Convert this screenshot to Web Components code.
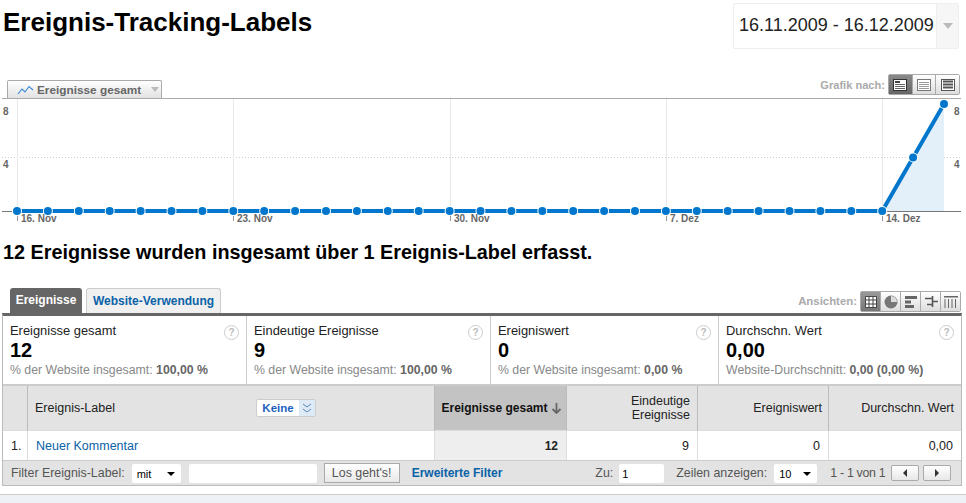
<!DOCTYPE html>
<html lang="de"><head><meta charset="utf-8"><title>Ereignis-Tracking-Labels</title>
<style>
html,body{margin:0;padding:0;background:#fff}
body{width:966px;height:503px;overflow:hidden;font:12px "Liberation Sans",Arial,sans-serif;color:#000}
</style></head><body>
<ga-head></ga-head>
<ga-chart></ga-chart>
<ga-summary>12 Ereignisse wurden insgesamt über 1 Ereignis-Label erfasst.</ga-summary>
<ga-tabs></ga-tabs>
<ga-report>
  <ga-stats>
    <ga-stat style="width:244px" label="Ereignisse gesamt" value="12" sub="% der Website insgesamt:" strong="100,00 %"></ga-stat>
    <ga-stat style="width:244px" label="Eindeutige Ereignisse" value="9" sub="% der Website insgesamt:" strong="100,00 %"></ga-stat>
    <ga-stat style="width:228px" label="Ereigniswert" value="0" sub="% der Website insgesamt:" strong="0,00 %"></ga-stat>
    <ga-stat style="flex:1" label="Durchschn. Wert" value="0,00" sub="Website-Durchschnitt:" strong="0,00 (0,00 %)"></ga-stat>
  </ga-stats>
  <ga-table></ga-table>
  <ga-filter></ga-filter>
</ga-report>
<ga-foot></ga-foot>
<script>
function def(name,css,html){
  customElements.define(name,class extends HTMLElement{
    connectedCallback(){
      if(this.shadowRoot)return;
      const r=this.attachShadow({mode:'open'});
      const h=typeof html==='function'?html(this):html;
      r.innerHTML='<style>'+css+'</style>'+h;
    }
  });
}
def('ga-head',`
:host{display:flex;justify-content:space-between;align-items:flex-start;height:74px;padding:3px 7px 0 3px;box-sizing:border-box}
h1{margin:3px 0 0;font:bold 26px/32px "Liberation Sans",sans-serif;white-space:nowrap}
.date{width:226px;height:46px;box-sizing:border-box;border:1px solid #eee;border-radius:2px;display:flex;font:18px/43px "Liberation Sans",sans-serif;color:#222;flex:none}
.date span{flex:1;padding-left:5px;white-space:nowrap}
.date i{width:21px;background:#f6f6f6;border-left:1px solid #eee;display:flex;align-items:center;justify-content:center}
.date i:after{content:"";border:5.5px solid transparent;border-top:6px solid #bbb;border-bottom:0}
`,`<h1>Ereignis-Tracking-Labels</h1><div class="date"><span>16.11.2009 - 16.12.2009</span><i></i></div>`);

def('ga-chart',`
:host{display:block;position:relative;height:154px;box-sizing:border-box}
.top{display:flex;justify-content:space-between;height:24px;padding:0 6px 0 7px;align-items:flex-end;box-sizing:border-box}
.tab{width:155px;height:18px;box-sizing:border-box;border:1px solid #aaa;border-bottom:0;border-radius:2px 2px 0 0;background:linear-gradient(#fff,#e2e2e2);display:flex;align-items:center;gap:3px;padding-left:9px;font:bold 11.8px "Liberation Sans",sans-serif;color:#666;white-space:nowrap}
.tab b{margin-left:7px;border:4px solid transparent;border-top:5px solid #bbb;border-bottom:0}
.right{display:flex;align-items:flex-start;height:24px;gap:3px;font:bold 11.1px/22px "Liberation Sans",sans-serif;color:#aaa;white-space:nowrap}
svg.c{display:block}
svg text{font:bold 10px "Liberation Sans",sans-serif;fill:#666}
.btns{display:flex;height:21px;border:1px solid #aaa;border-radius:2px;box-sizing:border-box;width:72px}
.btns span{flex:1;display:flex;align-items:center;justify-content:center;background:linear-gradient(#fff,#ddd);border-left:1px solid #aaa}
.btns span:first-child{border-left:0;background:linear-gradient(#8a8a8a,#666)}
`,()=>{
  let pts=[];for(let i=0;i<=30;i++){pts.push([17+i*30.9,i==29?59.5:i==30?6:113]);}
  let circles=pts.map(p=>`<circle cx="${p[0]}" cy="${p[1]}" r="5" fill="#fff"/><circle cx="${p[0]}" cy="${p[1]}" r="4" fill="#0077cc"/>`).join('');
  let line=pts.map(p=>p.join(',')).join(' ');
  const vg=[17,233,450,666,882].map(x=>`<line x1="${x+.5}" x2="${x+.5}" y1="1" y2="113" stroke="#e8e8e8"/><line x1="${x+.5}" x2="${x+.5}" y1="115" y2="123" stroke="#999"/>`).join('');
  const lab=[[21,'16. Nov'],[237,'23. Nov'],[454,'30. Nov'],[670,'7. Dez'],[886,'14. Dez']].map(a=>`<text x="${a[0]}" y="124">${a[1]}</text>`).join('');
  const ico=(d)=>`<svg width="16" height="14" viewBox="0 0 16 14">${d}</svg>`;
  const lines=(ys,c,w)=>ys.map(y=>`<line x1="3" x2="13" y1="${y+.5}" y2="${y+.5}" stroke="${c}" stroke-width="${w||1}"/>`).join('');
  return `<div class="top"><div class="tab"><svg width="17" height="10" viewBox="0 0 17 10"><path d="M1 9 5 4 8 7 12 1.5 16 5" fill="none" stroke="#3a87d6" stroke-width="1.1"/></svg>Ereignisse gesamt<b></b></div>
  <div class="right">Grafik nach:<div class="btns"><span>${ico(`<rect x="1.5" y="1.5" width="13" height="11" fill="#fff" stroke="#333"/><rect x="3" y="3" width="5" height="2" fill="#444"/>${lines([6,8,10],'#666')}`)}</span><span>${ico(`<rect x="1.5" y="1.5" width="13" height="11" fill="#fff" stroke="#777"/>${lines([4,6,8,10],'#999')}`)}</span><span>${ico(`<rect x="1.5" y="1.5" width="13" height="11" fill="#fff" stroke="#555"/>${lines([3,6,9],'#555',2)}`)}</span></div></div></div>
  <svg class="c" width="966" height="130" viewBox="0 0 966 130">
  <line x1="2" x2="961" y1=".5" y2=".5" stroke="#aaa"/>
  <line x1="2" x2="961" y1="59.5" y2="59.5" stroke="#ccc" stroke-dasharray="1 2"/>
  <polygon points="882,113 913,59.5 944,6 944,113" fill="#e4f0f9"/>
  <line x1="2" x2="961" y1="113.5" y2="113.5" stroke="#777"/>
  ${vg}
  <polyline points="${line}" fill="none" stroke="#0077cc" stroke-width="4"/>
  ${circles}
  <text x="3" y="17">8</text><text x="3" y="70">4</text><text x="954" y="17">8</text><text x="954" y="70">4</text>
  ${lab}
  </svg>`;
});

def('ga-summary',`
:host{display:block;height:50px;padding:13px 0 0 3px;font:bold 19.8px/23px "Liberation Sans",sans-serif;box-sizing:border-box;white-space:nowrap}
`,`<slot></slot>`);

def('ga-tabs',`
:host{display:flex;justify-content:space-between;height:35px;padding:13px 5px 0 10px;box-sizing:border-box}
.l{display:flex;gap:4px;align-items:flex-end}
.t{height:25px;box-sizing:border-box;border-radius:3px 3px 0 0;font:bold 12px/25px "Liberation Sans",sans-serif;text-align:center;white-space:nowrap}
.a{width:72px;background:#666;color:#fff}
.b{width:135px;background:#f0f0f0;border:1px solid #ccc;border-bottom:0;color:#0a62a8;line-height:24px}
.r{display:flex;gap:3px;font:bold 11.4px/21px "Liberation Sans",sans-serif;color:#aaa;white-space:nowrap}
.btns{display:flex;width:101px;height:21px;box-sizing:border-box;border:1px solid #aaa;border-radius:2px}
.btns span{flex:1;display:flex;align-items:center;justify-content:center;background:linear-gradient(#fff,#ddd);border-left:1px solid #aaa}
.btns span:first-child{border-left:0;background:linear-gradient(#999,#777)}
`,`<div class="l"><div class="t a">Ereignisse</div><div class="t b">Website-Verwendung</div></div>
<div class="r">Ansichten:<div class="btns">
<span><svg width="14" height="14" viewBox="0 0 14 14"><path d="M1.5 1.5h11v11h-11zM5 1.5v11M9 1.5v11M1.5 5h11M1.5 9h11" fill="#fff" stroke="#444"/></svg></span>
<span><svg width="14" height="14" viewBox="0 0 14 14"><circle cx="7" cy="7" r="6.5" fill="#777"/><path d="M7 7V1A6 6 0 0 1 13 7z" fill="#ddd"/></svg></span>
<span><svg width="14" height="14" viewBox="0 0 14 14"><path d="M1 1h12v3H1zM1 5.5h6v3H1zM1 10h9v3H1z" fill="#666"/></svg></span>
<span><svg width="14" height="14" viewBox="0 0 14 14"><path d="M1 3.5h8M8.500 1v11M8.500 6.500H14M3 9.500h5.500" fill="none" stroke="#555" stroke-width="1.6"/></svg></span>
<span><svg width="16" height="14" viewBox="0 0 16 14"><path d="M1 1h14v1.500H1z" fill="#666"/><path d="M2 4v9M5.500 4v9M9 4v9M12.500 4v9" fill="none" stroke="#666"/></svg></span>
</div></div>`);

def('ga-report',`
:host{display:block;margin:0 4px 0 2px;border-top:3px solid #666;border-left:1px solid #bbb;border-right:1px solid #bbb;border-bottom:1px solid #bbb;height:173px;box-sizing:border-box}
`,`<slot></slot>`);
def('ga-stats',`:host{display:flex;height:68px;border-bottom:2px solid #ccc;box-sizing:content-box}`,`<slot></slot>`);
def('ga-stat',`
:host{display:block;position:relative;box-sizing:border-box;border-right:1px solid #ccc;padding:8px 7px 0 7px;color:#222;white-space:nowrap}
:host(:last-child){border-right:0}
.l{font:12.9px/14px "Liberation Sans",sans-serif}
.v{font:bold 20px/23px "Liberation Sans",sans-serif;color:#000;margin-top:1px}
.s{font:12.3px/14px "Liberation Sans",sans-serif;color:#888;margin-top:1px}
.s b{color:#666}
.q{position:absolute;top:9px;right:7px;width:15px;height:15px;box-sizing:border-box;border:1px solid #ccc;border-radius:50%;font:bold 10px/13px "Liberation Sans",sans-serif;color:#bbb;text-align:center}
`,e=>`<div class="l">${e.getAttribute('label')}</div><div class="v">${e.getAttribute('value')}</div><div class="s">${e.getAttribute('sub')} <b>${e.getAttribute('strong')}</b></div><div class="q">?</div>`);

def('ga-table',`
:host{display:grid;grid-template-columns:25px 407px 132px 131px 131px 1fr;grid-template-rows:45px 29px;font:12.5px "Liberation Sans",sans-serif;color:#222}
.h{background:#e3e3e3;border-right:1px solid #bbb;border-bottom:1px solid #ddd;display:flex;align-items:center;justify-content:flex-end;padding:0 7px;text-align:right;box-sizing:border-box;line-height:14px}
.d{border-right:1px solid #ddd;display:flex;align-items:center;justify-content:flex-end;padding:0 8px;box-sizing:border-box}
.h:nth-of-type(6),.d:last-child{border-right:0}
.sort{background:#c3c3c3;font:bold 12px "Liberation Sans",sans-serif;color:#111;white-space:nowrap;padding:0 0 0 2px;justify-content:center}
.sort svg{margin-left:3px}
.lab{justify-content:space-between;padding:0 118px 0 7px}
.k{width:60px;height:18px;box-sizing:border-box;border:1px solid #ccc;border-radius:2px;background:#fff;display:flex;font:bold 11.5px/16px "Liberation Sans",sans-serif;color:#1d5fbf}
.k span{flex:1;text-align:center}
.k i{width:16px;background:#deebf7;display:flex;align-items:center;justify-content:center}
.link{color:#0a62a8;justify-content:flex-start}
.num{justify-content:flex-start}
.sd{background:#eee;font:bold 12px "Liberation Sans",sans-serif}
`,`
<div class="h"></div>
<div class="h lab"><span>Ereignis-Label</span><div class="k"><span>Keine</span><i><svg width="10" height="10" viewBox="0 0 10 10"><path d="M1 1 5 4 9 1M1 6 5 9 9 6" fill="none" stroke="#5a86b8"/></svg></i></div></div>
<div class="h sort">Ereignisse gesamt<svg width="11" height="11" viewBox="0 0 11 11"><path d="M5.500 0v10M1.500 6l4 4 4-4" fill="none" stroke="#666" stroke-width="1.8"/></svg></div>
<div class="h">Eindeutige<br>Ereignisse</div>
<div class="h" style="padding-right:6px">Ereigniswert</div>
<div class="h">Durchschn. Wert</div>
<div class="d num">1.</div><div class="d link">Neuer Kommentar</div><div class="d sd">12</div><div class="d">9</div><div class="d">0</div><div class="d">0,00</div>
`);

def('ga-filter',`
:host{display:flex;align-items:center;height:25px;background:#e3e3e3;border-top:1px solid #ccc;box-sizing:border-box;padding:0 0 0 8px;font:12.4px "Liberation Sans",sans-serif;color:#555;white-space:nowrap}
.sel{width:49px;height:19px;background:#fff;border-radius:2px;font:11px/21px "Liberation Sans",sans-serif;color:#000;padding-left:5px;box-sizing:border-box;position:relative}
.sel:after{content:"";position:absolute;right:6px;top:8px;border:4px solid transparent;border-top:4px solid #000;border-bottom:0}
.inp{width:128px;height:19px;background:#fff;border-radius:2px;margin-left:8px}
.btn{width:76px;height:20px;margin-left:7px;box-sizing:border-box;border:1px solid #aaa;background:linear-gradient(#fff,#e8e8e8);text-align:center;line-height:18px;color:#555}
.a{font:bold 12px "Liberation Sans",sans-serif;color:#0a62a8;margin-left:12px}
.z{width:45px;height:19px;background:#fff;border-radius:2px;font:11px/21px "Liberation Sans",sans-serif;color:#000;padding-left:3px;box-sizing:border-box;margin-left:6px}
.p{width:28px;height:16px;box-sizing:border-box;border:1px solid #aaa;border-radius:2px;background:linear-gradient(#fff,#e8e8e8);display:flex;align-items:center;justify-content:center}
.l:after{content:"";border:4px solid transparent;border-right:4px solid #333;border-left:0}
.r:after{content:"";border:4px solid transparent;border-left:4px solid #333;border-right:0}
`,`<span style="margin-right:7px">Filter Ereignis-Label:</span><div class="sel">mit</div><div class="inp"></div><div class="btn">Los geht's!</div><span class="a">Erweiterte Filter</span>
<span style="margin-left:93px">Zu:</span><div class="z">1</div><span style="margin-left:12px">Zeilen anzeigen:</span><div class="sel" style="margin-left:7px;width:43px">10</div><span style="margin-left:13px;letter-spacing:-.3px">1 - 1 von 1</span><div class="p l" style="margin-left:6px"></div><div class="p r" style="margin-left:4px"></div>`);

def('ga-foot',`:host{display:block;height:9px;margin-top:8px;background:#eef1f5;border-top:1px solid #ccc;box-sizing:border-box}`,``);
</script>
</body></html>
